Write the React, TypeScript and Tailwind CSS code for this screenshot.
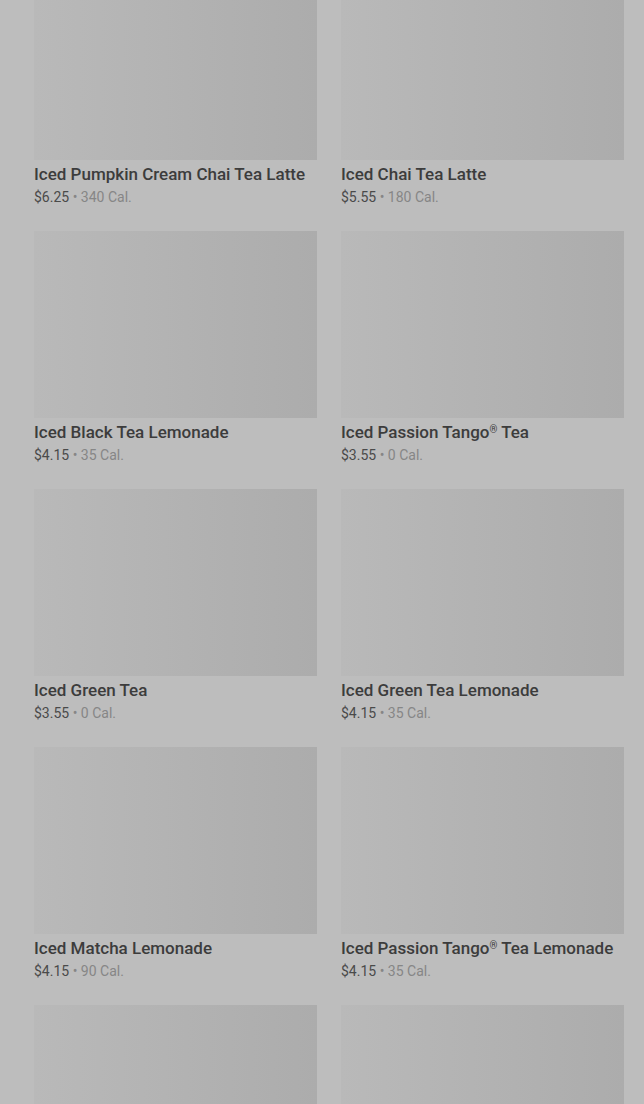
const drinks = [
  { name: "Iced Pumpkin Cream Chai Tea Latte", price: "$6.25", cal: "340 Cal." },
  { name: "Iced Chai Tea Latte", price: "$5.55", cal: "180 Cal." },
  { name: "Iced Black Tea Lemonade", price: "$4.15", cal: "35 Cal." },
  { name: "Iced Passion Tango® Tea", price: "$3.55", cal: "0 Cal." },
  { name: "Iced Green Tea", price: "$3.55", cal: "0 Cal." },
  { name: "Iced Green Tea Lemonade", price: "$4.15", cal: "35 Cal." },
  { name: "Iced Matcha Lemonade", price: "$4.15", cal: "90 Cal." },
  { name: "Iced Passion Tango® Tea Lemonade", price: "$4.15", cal: "35 Cal." },
  { name: "", price: "", cal: "" },
  { name: "", price: "", cal: "" },
];

// splits out the ® mark so it can sit raised and small like the menu
function DrinkName({ name }: { name: string }) {
  const parts = name.split("®");
  return (
    <>
      {parts.map((p, i) => (
        <span key={i}>
          {p}
          {i < parts.length - 1 ? (
            <span className="relative top-[-5px] text-[10px] leading-none">®</span>
          ) : null}
        </span>
      ))}
    </>
  );
}

export default function App() {
  return (
    <div
      className="h-[1104px] w-[644px] overflow-hidden bg-[#bdbdbd]"
      style={{ fontFamily: "Roboto, 'Liberation Sans', sans-serif" }}
    >
      <div className="mt-[-27px] grid grid-cols-2 gap-x-[24px] gap-y-[24px] pl-[34px] pr-[20px]">
        {drinks.map((d, i) => (
          <div key={i} className="flex flex-col">
            <div className="h-[187px] w-full bg-linear-to-r from-[#b9b9b9] to-[#acacac]" />
            {d.name ? (
              <>
                <div className="mt-[3px] h-[22px] overflow-hidden text-[17px] leading-[22px] font-medium text-[#3c3c3c] whitespace-nowrap">
                  <DrinkName name={d.name} />
                </div>
                <div className="mt-[2px] h-[20px] text-[14px] leading-[20px] text-[#4a4a4a]">
                  {d.price}
                  <span className="text-[#868686]"> • {d.cal}</span>
                </div>
              </>
            ) : null}
          </div>
        ))}
      </div>
    </div>
  );
}
